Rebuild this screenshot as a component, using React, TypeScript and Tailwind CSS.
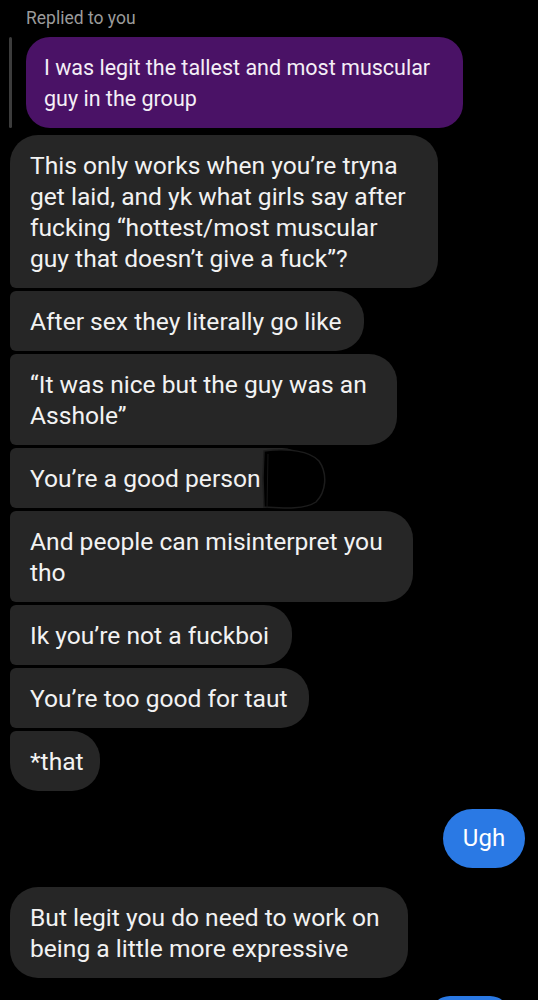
const font = { fontFamily: "Roboto, 'Noto Sans', sans-serif" };

type Pos = "first" | "mid" | "last" | "solo";

function Bubble({ lines, pos, w }: { lines: string[]; pos: Pos; w?: string }) {
  const corners =
    pos === "first"
      ? "rounded-[28px] rounded-bl-[6px]"
      : pos === "mid"
      ? "rounded-[28px] rounded-l-[6px]"
      : pos === "last"
      ? "rounded-[28px] rounded-tl-[6px]"
      : "rounded-[28px]";
  return (
    <div
      className={`bg-[#262626] text-[#f2f2f2] text-[24.6px] leading-[31px] pl-[20px] pr-[20px] py-[14.5px] ${corners} ${w ?? "w-fit"}`}
    >
      {lines.map((l, i) => (
        <div key={i} className="whitespace-nowrap">
          {l}
        </div>
      ))}
    </div>
  );
}

export default function App() {
  return (
    <div className="w-[538px] h-[1000px] bg-black overflow-hidden relative" style={font}>
      <div className="pl-[26px] pt-[6px] text-[17.5px] leading-[24px] text-[#9b9b9b]">Replied to you</div>

      <div className="flex pl-[9px] mt-[7px]">
        <div className="w-[3px] bg-[#3c3c3c] rounded-full" />
        <div className="ml-[14px] w-[437px] bg-[#4a1266] text-[#f4eef6] text-[21.5px] leading-[31px] pl-[18px] py-[14.5px] rounded-[24px]">
          <div>I was legit the tallest and most muscular</div>
          <div>guy in the group</div>
        </div>
      </div>

      <div className="flex flex-col gap-[3px] pl-[10px] mt-[7px]">
        <Bubble
          pos="first"
          w="w-[428px]"
          lines={[
            "This only works when you’re tryna",
            "get laid, and yk what girls say after",
            "fucking “hottest/most muscular",
            "guy that doesn’t give a fuck”?",
          ]}
        />
        <Bubble pos="mid" w="w-[354px]" lines={["After sex they literally go like"]} />
        <Bubble pos="mid" w="w-[387px]" lines={["“It was nice but the guy was an", "Asshole”"]} />
        <div className="relative w-fit">
          <Bubble pos="mid" w="w-[300px]" lines={["You’re a good person"]} />
          <svg className="absolute left-[250px] top-[0px]" width="72" height="62" viewBox="0 0 72 62">
            <path
              d="M4 3 C28 0 50 3 59 13 C68 26 66 44 56 54 C44 62 22 60 4 59 L3 30 Z"
              fill="#000"
              stroke="#1c1c1c"
              strokeWidth="1.5"
            />
            <path d="M8 6 L7 60" stroke="#161616" strokeWidth="1" />
          </svg>
        </div>
        <Bubble pos="mid" w="w-[403px]" lines={["And people can misinterpret you", "tho"]} />
        <Bubble pos="mid" w="w-[282px]" lines={["Ik you’re not a fuckboi"]} />
        <Bubble pos="mid" w="w-[299px]" lines={["You’re too good for taut"]} />
        <Bubble pos="last" w="w-[90px]" lines={["*that"]} />
      </div>

      <div className="flex justify-end pr-[13px] mt-[18px]">
        <div className="bg-[#2a79e4] text-white text-[24px] leading-[31px] w-[82px] h-[59px] flex items-center justify-center rounded-[30px]">
          Ugh
        </div>
      </div>

      <div className="pl-[10px] mt-[19px]">
        <Bubble
          pos="solo"
          w="w-[398px]"
          lines={["But legit you do need to work on", "being a little more expressive"]}
        />
      </div>

      <div className="flex justify-end pr-[28px] mt-[18px]">
        <div className="bg-[#2a79e4] w-[80px] h-[40px] rounded-[20px]" />
      </div>
    </div>
  );
}
